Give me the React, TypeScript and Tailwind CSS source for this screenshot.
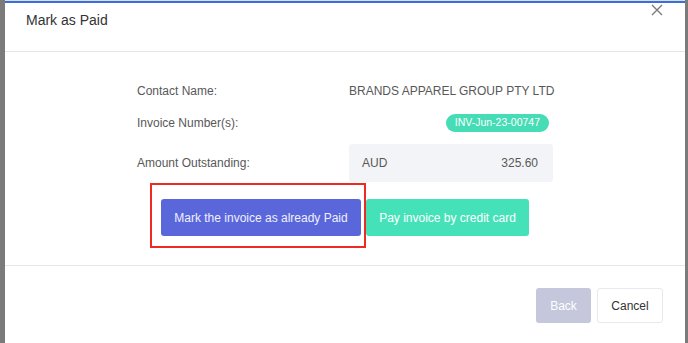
import React from "react";

export default function App() {
  return (
    <div
      className="flex h-[343px] w-[688px] overflow-hidden bg-[#7b7b7b]"
      style={{ fontFamily: '"Liberation Sans", Arial, sans-serif' }}
    >
      <div className="w-[5px] shrink-0 bg-[#7b7b7b]" />
      <div className="relative flex w-[680px] shrink-0 flex-col bg-white">
        <div className="h-[1px] bg-[#d9dde6]" />
        <div className="h-[2px] bg-[#3a6fd9]" />
        {/* header */}
        <div className="relative h-[49px] border-b border-[#e6e6e6] pl-[21px] pt-[7px]">
          <div className="text-[14px] leading-[20px] text-[#333]">Mark as Paid</div>
          <svg
            className="absolute left-[646px] top-[1px]"
            width="12"
            height="12"
            viewBox="0 0 12 12"
            fill="none"
            stroke="#7a7a7a"
            strokeWidth="1.4"
          >
            <path d="M1 1L11 11M11 1L1 11" />
          </svg>
        </div>
        {/* body */}
        <div className="flex flex-col items-center border-b border-[#e6e6e6] pt-[29px] pb-[29px]">
          <div className="grid w-[416px] grid-cols-[212px_204px] text-[12px] text-[#585858]">
            <div className="flex h-[20px] items-center">Contact Name:</div>
            <div className="flex h-[20px] items-center whitespace-nowrap">BRANDS APPAREL GROUP PTY LTD</div>
            <div className="mt-[12px] flex h-[20px] items-center">Invoice Number(s):</div>
            <div className="mt-[12px] flex h-[20px] items-center justify-end pr-[4px]">
              <span className="flex h-[18px] items-center rounded-full bg-[#45dcb6] px-[9px] text-[10.5px] text-white">
                INV-Jun-23-00747
              </span>
            </div>
            <div className="mt-[11px] flex h-[38px] items-center">Amount Outstanding:</div>
            <div className="mt-[11px] flex h-[38px] items-center justify-between rounded-[3px] bg-[#f3f4f7] pl-[13px] pr-[15px]">
              <span>AUD</span>
              <span>325.60</span>
            </div>
          </div>
          <div className="relative mt-[17px] flex gap-[5px]">
            <button className="h-[37px] w-[200px] rounded-[3px] bg-[#5a67db] text-[12px] text-[#f0f0ff]">
              Mark the invoice as already Paid
            </button>
            <button className="h-[37px] w-[163px] rounded-[3px] bg-[#45e2b9] text-[12px] text-white">
              Pay invoice by credit card
            </button>
            <div className="pointer-events-none absolute left-[-11px] top-[-16px] h-[65px] w-[216px] border-2 border-[#ee2a24]" />
          </div>
        </div>
        {/* footer */}
        <div className="flex justify-end gap-[6px] pr-[22px] pt-[22px]">
          <button className="h-[35px] w-[55px] rounded-[3px] bg-[#c5c7dc] text-[12px] text-white">Back</button>
          <button className="h-[35px] w-[66px] rounded-[3px] border border-[#e8e8ee] bg-white text-[12px] text-[#333]">
            Cancel
          </button>
        </div>
      </div>
      <div className="w-[3px] shrink-0 bg-[#7b7b7b]" />
    </div>
  );
}
